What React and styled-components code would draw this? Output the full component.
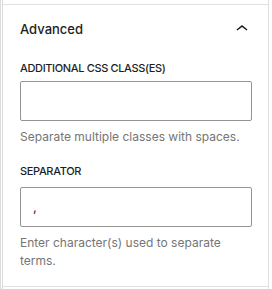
import React from "react";
import styled, { createGlobalStyle } from "styled-components";

const Global = createGlobalStyle`
  html, body { margin: 0; padding: 0; background: #fff; }
  body { font-family: Inter, "Noto Sans", sans-serif; -webkit-font-smoothing: antialiased; }
`;

const Sidebar = styled.div`
  box-sizing: border-box;
  width: 269px;
  height: 289px;
  padding-top: 4px;
  border-left: 3px double #dcdcdc;
  border-right: 1px solid #e0e0e0;
  background: #fff;
`;

const Panel = styled.section`
  border-top: 1px solid #e0e0e0;
  border-bottom: 1px solid #e0e0e0;
`;

const Header = styled.button`
  box-sizing: border-box;
  width: 100%;
  height: 48px;
  display: flex;
  align-items: center;
  justify-content: space-between;
  padding: 0 14px 0 17px;
  border: 0;
  background: transparent;
  font-family: inherit;
  font-size: 13px;
  font-weight: 500;
  color: #1e1e1e;
  cursor: pointer;
`;

const Body = styled.div`
  padding: 7px 16px 16px 17px;
  display: flex;
  flex-direction: column;
  gap: 17px;
`;

const Field = styled.div`
  display: flex;
  flex-direction: column;
`;

const Label = styled.label`
  font-size: 11px;
  font-weight: 500;
  line-height: 16px;
  letter-spacing: -0.35px;
  text-transform: uppercase;
  color: #1e1e1e;
  margin-bottom: ${(p) => p.$gap}px;
`;

const Input = styled.input`
  box-sizing: border-box;
  width: 100%;
  height: 40px;
  margin: 0;
  padding: 0 12px;
  border: 1px solid #949494;
  border-radius: 2px;
  font-family: inherit;
  font-size: 13px;
  color: #1e1e1e;
  background: #fff;
  outline: none;
`;

const Help = styled.p`
  margin: 7px 0 0;
  font-size: 12px;
  line-height: 18px;
  color: #757575;
`;

const Chevron = () => (
  <svg width="24" height="24" viewBox="0 0 24 24" aria-hidden="true">
    <path d="M6.5 12.4L12 8l5.5 4.4-.9 1.2L12 10l-4.6 3.6-1-1.2z" fill="#1e1e1e" />
  </svg>
);

export default function App() {
  return (
    <>
      <Global />
      <Sidebar>
        <Panel>
          <Header>
            <span>Advanced</span>
            <Chevron />
          </Header>
          <Body>
            <Field>
              <Label $gap={5}>Additional CSS class(es)</Label>
              <Input defaultValue="" />
              <Help>Separate multiple classes with spaces.</Help>
            </Field>
            <Field>
              <Label $gap={8}>Separator</Label>
              <Input defaultValue="," />
              <Help>Enter character(s) used to separate terms.</Help>
            </Field>
          </Body>
        </Panel>
      </Sidebar>
    </>
  );
}
